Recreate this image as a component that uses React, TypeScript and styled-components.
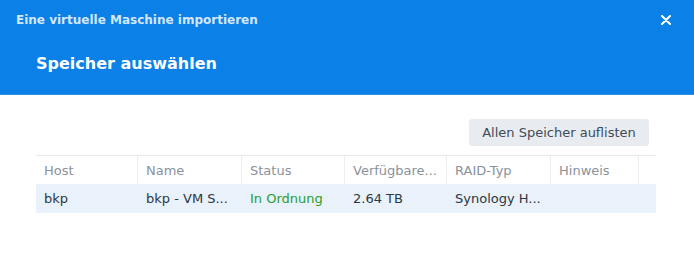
import { createGlobalStyle, styled } from "styled-components";

const GlobalStyle = createGlobalStyle`
  html, body {
    margin: 0;
    padding: 0;
    background: #ffffff;
  }
  body {
    font-family: "DejaVu Sans", Verdana, sans-serif;
  }
`;

const Dialog = styled.div`
  width: 694px;
  height: 263px;
  background: #ffffff;
  display: flex;
  flex-direction: column;
  overflow: hidden;
`;

const Header = styled.div`
  height: 94px;
  background: #0b80e7;
  border-bottom: 1px solid #2b8fe6;
  display: flex;
  flex-direction: column;
`;

const TitleBar = styled.div`
  height: 40px;
  padding: 0 20px 0 16px;
  display: flex;
  align-items: center;
  justify-content: space-between;
`;

const WindowTitle = styled.div`
  font-size: 12px;
  font-weight: bold;
  color: #d4e7fb;
`;

const CloseButton = styled.button`
  width: 16px;
  height: 16px;
  padding: 0;
  border: none;
  background: transparent;
  display: flex;
  align-items: center;
  justify-content: center;
  cursor: pointer;
`;

const StepTitle = styled.div`
  padding: 14px 0 0 36px;
  font-size: 16px;
  font-weight: bold;
  color: #ffffff;
`;

const Body = styled.div`
  padding: 24px 38px 0 36px;
  display: flex;
  flex-direction: column;
`;

const Toolbar = styled.div`
  display: flex;
  justify-content: flex-end;
  padding-right: 7px;
  margin-bottom: 9px;
`;

const Button = styled.button`
  height: 27px;
  width: 180px;
  padding: 0;
  border: none;
  border-radius: 3px;
  background: #e8ecf1;
  color: #414b55;
  font-family: "DejaVu Sans", Verdana, sans-serif;
  font-size: 13px;
  cursor: pointer;
`;

const Grid = styled.div`
  display: grid;
  grid-template-columns: 102px 104px 103px 102px 104px 88px 1fr;
  border-top: 1px solid #e6e9ed;
`;

const HeadCell = styled.div<{ $filler?: boolean }>`
  height: 28px;
  padding: 0 8px;
  display: flex;
  align-items: center;
  font-size: 13px;
  color: #8a929b;
  border-right: ${(props) => (props.$filler ? "none" : "1px solid #eceef1")};
  white-space: nowrap;
  overflow: hidden;
`;

const Cell = styled.div<{ $status?: boolean }>`
  height: 29px;
  padding: 0 8px;
  display: flex;
  align-items: center;
  font-size: 13px;
  background: #e9f1fb;
  color: ${(props) => (props.$status ? "#2a9d2f" : "#2d3742")};
  white-space: nowrap;
  overflow: hidden;
`;

const columns = ["Host", "Name", "Status", "Verfügbare...", "RAID-Typ", "Hinweis", ""];

const row = [
  { text: "bkp" },
  { text: "bkp - VM S..." },
  { text: "In Ordnung", status: true },
  { text: "2.64 TB" },
  { text: "Synology H..." },
  { text: "" },
  { text: "" },
];

const App = () => {
  return (
    <>
      <GlobalStyle />
      <Dialog>
        <Header>
          <TitleBar>
            <WindowTitle>Eine virtuelle Maschine importieren</WindowTitle>
            <CloseButton aria-label="close">
              <svg width="10" height="10" viewBox="0 0 10 10">
                <path
                  d="M1 1 L9 9 M9 1 L1 9"
                  stroke="#ffffff"
                  strokeWidth="2"
                  strokeLinecap="round"
                />
              </svg>
            </CloseButton>
          </TitleBar>
          <StepTitle>Speicher auswählen</StepTitle>
        </Header>
        <Body>
          <Toolbar>
            <Button>Allen Speicher auflisten</Button>
          </Toolbar>
          <Grid>
            {columns.map((c, i) => (
              <HeadCell key={i} $filler={i === columns.length - 1}>
                {c}
              </HeadCell>
            ))}
            {row.map((c, i) => (
              <Cell key={i} $status={c.status}>
                {c.text}
              </Cell>
            ))}
          </Grid>
        </Body>
      </Dialog>
    </>
  );
};

export default App;
